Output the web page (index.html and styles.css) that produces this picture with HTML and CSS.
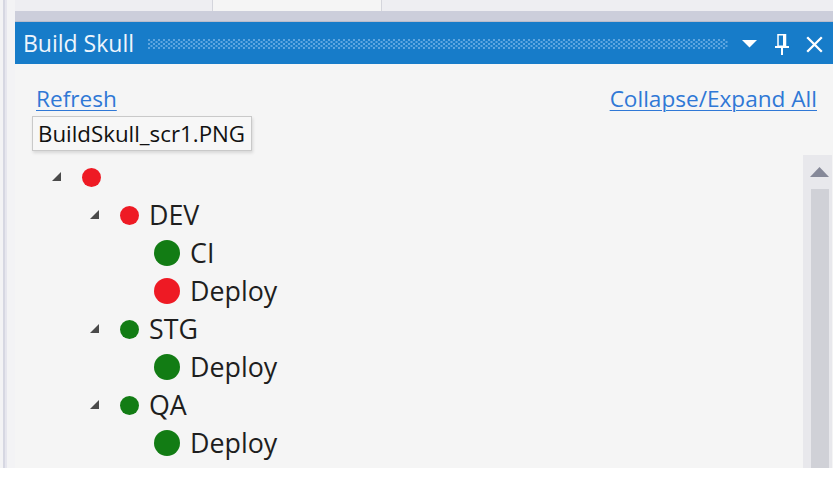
FILE: index.html
```html
<!DOCTYPE html>
<html>
<head>
<meta charset="utf-8">
<title>Build Skull</title>
<link rel="stylesheet" href="styles.css">
</head>
<body>
<div class="screen">
  <div class="gutter"><div class="gutter-line"></div></div>
  <div class="panel">
    <div class="tabstrip">
      <div class="tab tab-left"></div>
      <div class="tab tab-active"></div>
      <div class="tab tab-right"></div>
    </div>
    <div class="graybar"></div>
    <div class="titlebar">
      <span class="title">Build Skull</span>
      <div class="grip"></div>
      <div class="tools">
        <svg class="tool-drop" width="15" height="8" viewBox="0 0 15 8"><polygon points="0,0 15,0 7.5,7.5" fill="#ffffff"/></svg>
        <svg class="tool-pin" width="14" height="21" viewBox="0 0 14 21">
          <rect x="3" y="0.75" width="7.5" height="11.5" fill="none" stroke="#ffffff" stroke-width="1.5"/>
          <rect x="8" y="1" width="2" height="11" fill="#ffffff"/>
          <rect x="0" y="12" width="14" height="2" fill="#ffffff"/>
          <rect x="6" y="14" width="2" height="7" fill="#ffffff"/>
        </svg>
        <svg class="tool-close" width="17" height="17" viewBox="0 0 17 17">
          <path d="M1.2 1.2 L15.8 15.8 M15.8 1.2 L1.2 15.8" stroke="#ffffff" stroke-width="2.3" fill="none"/>
        </svg>
      </div>
    </div>
    <div class="content">
      <div class="links">
        <a class="link" href="#">Refresh</a>
        <a class="link" href="#">Collapse/Expand All</a>
      </div>
      <div class="tooltip">BuildSkull_scr1.PNG</div>
      <div class="treearea">
        <ul class="tree">
          <li class="row lvl0">
            <span class="toggle"><svg width="9" height="9" viewBox="0 0 9 9"><polygon points="9,0 9,9 0,9" fill="#4a4a4a"/></svg></span>
            <span class="dot small red"></span>
          </li>
          <li class="row lvl1">
            <span class="toggle"><svg width="9" height="9" viewBox="0 0 9 9"><polygon points="9,0 9,9 0,9" fill="#4a4a4a"/></svg></span>
            <span class="dot small red"></span>
            <span class="label">DEV</span>
          </li>
          <li class="row lvl2">
            <span class="toggle"></span>
            <span class="dot big green"></span>
            <span class="label">CI</span>
          </li>
          <li class="row lvl2">
            <span class="toggle"></span>
            <span class="dot big red"></span>
            <span class="label">Deploy</span>
          </li>
          <li class="row lvl1">
            <span class="toggle"><svg width="9" height="9" viewBox="0 0 9 9"><polygon points="9,0 9,9 0,9" fill="#4a4a4a"/></svg></span>
            <span class="dot small green"></span>
            <span class="label">STG</span>
          </li>
          <li class="row lvl2">
            <span class="toggle"></span>
            <span class="dot big green"></span>
            <span class="label">Deploy</span>
          </li>
          <li class="row lvl1">
            <span class="toggle"><svg width="9" height="9" viewBox="0 0 9 9"><polygon points="9,0 9,9 0,9" fill="#4a4a4a"/></svg></span>
            <span class="dot small green"></span>
            <span class="label">QA</span>
          </li>
          <li class="row lvl2">
            <span class="toggle"></span>
            <span class="dot big green"></span>
            <span class="label">Deploy</span>
          </li>
        </ul>
        <div class="scrollbar">
          <div class="sb-up"><svg width="19" height="10" viewBox="0 0 19 10"><polygon points="0,10 19,10 9.5,0" fill="#868999"/></svg></div>
          <div class="sb-thumb"></div>
        </div>
      </div>
    </div>
  </div>
  <div class="rightedge"></div>
</div>
</body>
</html>
```
FILE: styles.css
```css
html, body {
  margin: 0;
  padding: 0;
  background: #ffffff;
}
body {
  width: 836px;
  height: 478px;
  overflow: hidden;
  font-family: "Open Sans", "Noto Sans", sans-serif;
}
.screen {
  display: flex;
  height: 468px;
  background: #f5f5f5;
}
.gutter {
  width: 15px;
  flex: 0 0 15px;
  background: #f3f3f5;
  display: flex;
}
.gutter-line {
  width: 2px;
  margin-left: 3px;
  background: #d6d7e2;
  border-right: 2px solid #e6e6ee;
}
.panel {
  width: 818px;
  flex: 0 0 818px;
  display: flex;
  flex-direction: column;
}
.rightedge {
  flex: 1;
  background: #ffffff;
}
.tabstrip {
  height: 11px;
  display: flex;
  background: #eeeef2;
}
.tab-left {
  width: 197px;
}
.tab-active {
  width: 168px;
  background: #f5f5f5;
  border-left: 1px solid #d4d5dc;
  border-right: 1px solid #d4d5dc;
}
.tab-right {
  flex: 1;
}
.graybar {
  height: 10px;
  background: #cccedb;
  border-bottom: 1px solid #b9bccb;
}
.titlebar {
  height: 42px;
  background: #177cc9;
  display: flex;
  align-items: center;
}
.title {
  flex: 0 0 125px;
  padding-left: 8px;
  color: #eef5fc;
  font-size: 23px;
  line-height: 30px;
  white-space: nowrap;
}
.grip {
  flex: 1;
  height: 10px;
  margin-top: 2px;
  margin-right: 14px;
  background:
    radial-gradient(circle at 1px 1px, #5ea6e0 0.75px, transparent 1.1px) 0 0 / 5px 4px,
    radial-gradient(circle at 1px 1px, #5ea6e0 0.75px, transparent 1.1px) 2.5px 2px / 5px 4px;
}
.tools {
  display: flex;
  align-items: center;
  padding-right: 10px;
}
.tool-drop {
  margin-top: 1px;
}
.tool-pin {
  margin-left: 18px;
  margin-top: 3px;
}
.tool-close {
  margin-left: 17px;
  margin-top: 2px;
}
.content {
  position: relative;
  flex: 1;
  display: flex;
  flex-direction: column;
  min-height: 0;
}
.links {
  display: flex;
  justify-content: space-between;
  padding: 20px 16px 0 21px;
  height: 30px;
}
.link {
  color: #2f78d6;
  font-size: 22.6px;
  line-height: 30px;
  text-decoration: underline;
  text-underline-offset: 3px;
  text-decoration-thickness: 1px;
}
.tooltip {
  position: absolute;
  left: 17px;
  top: 52px;
  padding: 0 6px 0 5px;
  background: #f7f7f7;
  border: 1px solid #c9c9c9;
  box-shadow: 1px 2px 3px rgba(0, 0, 0, 0.12);
  color: #111111;
  font-size: 22.3px;
  line-height: 33px;
  white-space: nowrap;
}
.treearea {
  margin-top: 41px;
  flex: 1;
  display: flex;
  min-height: 0;
}
.tree {
  list-style: none;
  margin: 0;
  padding: 3px 0 0 0;
  flex: 1;
}
.row {
  display: flex;
  align-items: center;
  height: 38px;
}
.lvl0 { padding-left: 31px; }
.lvl1 { padding-left: 69px; }
.lvl2 { padding-left: 107px; }
.toggle {
  width: 20px;
  height: 20px;
  flex: 0 0 20px;
  display: flex;
  align-items: center;
  justify-content: center;
  margin-top: -2px;
}
.dot {
  border-radius: 50%;
  flex: 0 0 auto;
}
.dot.small {
  width: 19px;
  height: 19px;
  margin-left: 16px;
}
.dot.big {
  width: 26px;
  height: 26px;
  margin-left: 12px;
}
.red { background: #ee1a24; }
.green { background: #127c14; }
.label {
  margin-left: 10px;
  color: #1e1e1e;
  font-size: 26.8px;
  line-height: 38px;
  white-space: nowrap;
}
.scrollbar {
  width: 29px;
  flex: 0 0 29px;
  margin-right: 1px;
  background: #e8e8ec;
  display: flex;
  flex-direction: column;
}
.sb-up {
  height: 34px;
  display: flex;
  justify-content: flex-end;
  padding-right: 3px;
  padding-top: 12px;
  box-sizing: border-box;
}
.sb-thumb {
  flex: 1;
  margin-left: 8px;
  margin-right: 3px;
  background: #d0d1d7;
}
```
